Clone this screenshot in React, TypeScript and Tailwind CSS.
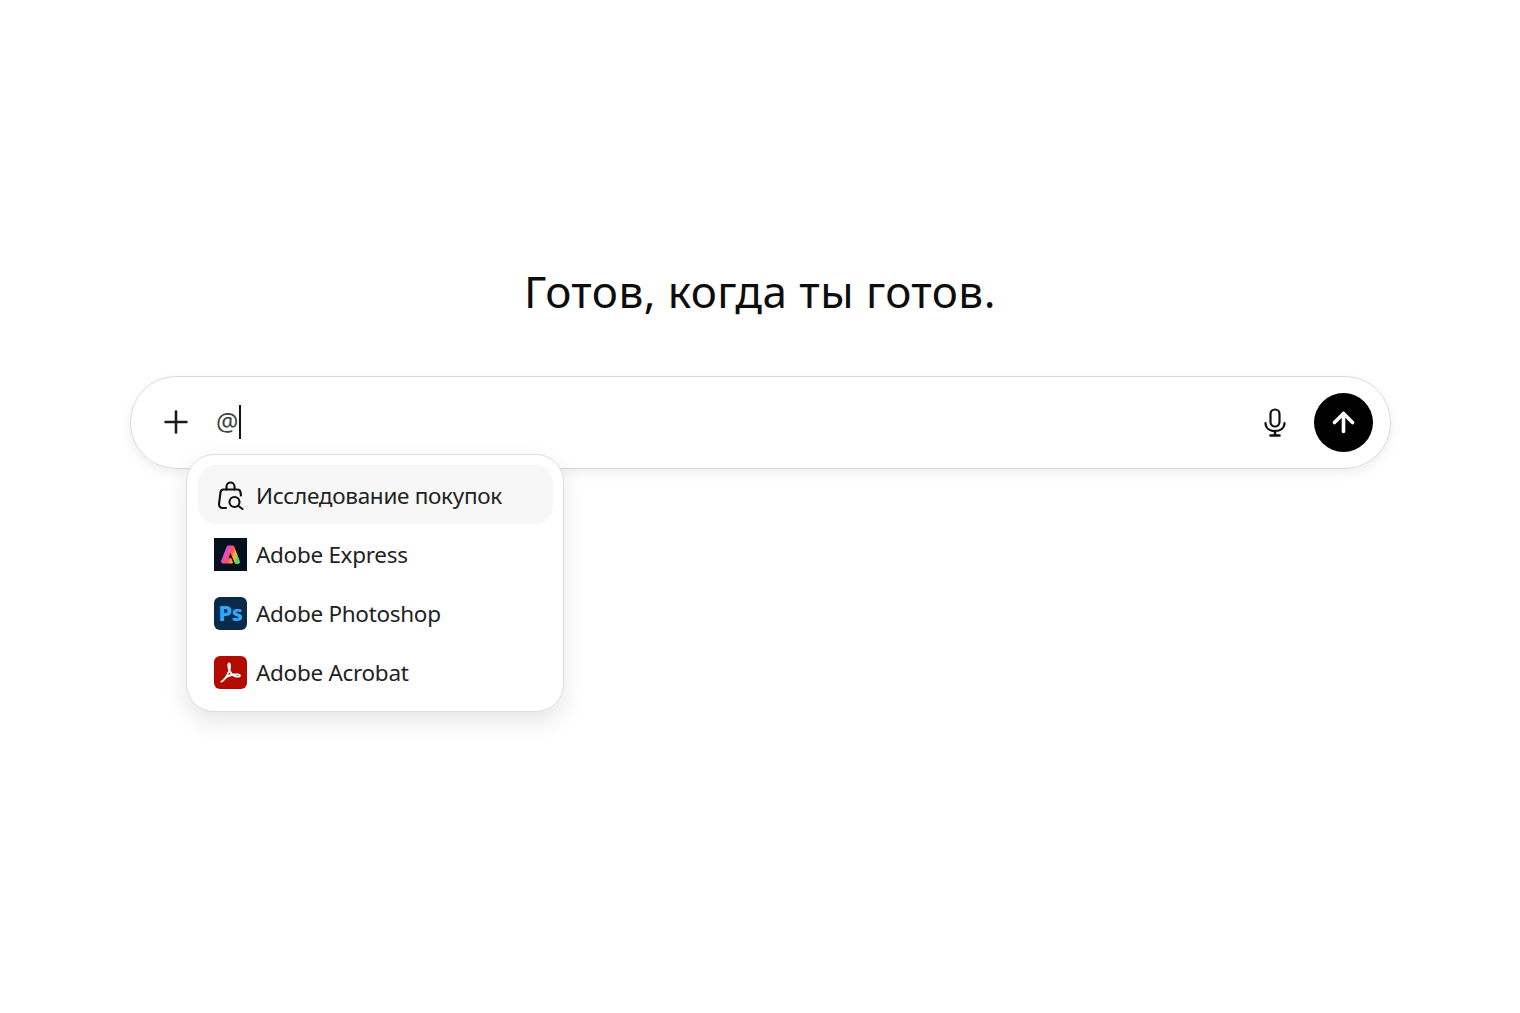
import { ArrowUp, Plus } from "lucide-react";
import { JSX, ReactNode, SVGProps } from "react";

const font = { fontFamily: '"Noto Sans", "Open Sans", sans-serif' };

export default function App() {
  return (
    <div
      className="flex h-[1013px] flex-col items-center overflow-hidden bg-white text-[#0d0d0d]"
      style={font}
    >
      <h1 className="mt-[263px] h-[56px] text-[44px] leading-[56px] font-normal tracking-[0.45px]">
        Готов, когда ты готов.
      </h1>
      <div className="relative mt-[57px] ml-[1px] w-[1261px]">
        <div className="flex h-[93px] items-center rounded-[46px] border border-[#d9d9d9] pr-[17px] pb-[1px] pl-[27px] shadow-[0_4px_12px_rgba(0,0,0,0.07)]">
          <Plus size={36} strokeWidth={1.7} className="text-[#1a1a1a]" />
          <div className="ml-[22px] flex flex-1 items-center text-[25px] text-[#444]">
            @<span className="ml-[1px] h-[34px] w-[2px] bg-[#111]" />
          </div>
          <MicIcon className="mr-[23px] h-[32px] w-[32px]" />
          <button className="flex h-[59px] w-[59px] items-center justify-center rounded-full bg-black">
            <ArrowUp size={31} strokeWidth={2.8} className="text-white" />
          </button>
        </div>
        <div className="absolute top-[78px] left-[56px] flex w-[378px] flex-col rounded-[28px] border border-[#dedede] bg-white py-[10px] pr-[10px] pl-[11px] shadow-[0_10px_24px_rgba(0,0,0,0.1)]">
          <MenuRow active icon={<BagSearchIcon className="h-[33px] w-[33px]" />}>
            Исследование покупок
          </MenuRow>
          <MenuRow icon={<ExpressIcon />}>Adobe Express</MenuRow>
          <MenuRow icon={<PhotoshopIcon />}>Adobe Photoshop</MenuRow>
          <MenuRow icon={<AcrobatIcon />}>Adobe Acrobat</MenuRow>
        </div>
      </div>
    </div>
  );
}

function MenuRow(props: { active?: boolean; icon: ReactNode; children: ReactNode }) {
  return (
    <div
      className={
        props.active
          ? "flex h-[59px] items-center gap-[9px] rounded-[18px] bg-[#f7f7f7] px-[16px] pt-[2px]"
          : "flex h-[59px] items-center gap-[9px] rounded-[18px] px-[16px] pt-[2px]"
      }
    >
      <span className="flex h-[33px] w-[33px] shrink-0 items-center justify-center">
        {props.icon}
      </span>
      <span className="pt-[2px] text-[22.5px] leading-none tracking-[-0.3px] text-[#222]">
        {props.children}
      </span>
    </div>
  );
}

function MicIcon(props: JSX.IntrinsicAttributes & SVGProps<SVGSVGElement>) {
  return (
    <svg {...props} viewBox="0 0 32 32" fill="none" stroke="#111" strokeWidth="2.2" strokeLinecap="round">
      <rect x="11.5" y="3.5" width="9" height="17" rx="4.5" />
      <path d="M6.5 17c0 5 4 8 9.500 8s9.500-3 9.500-8" />
      <path d="M16 25v4M11.500 29.500h9" strokeWidth="2.600" />
    </svg>
  );
}

function BagSearchIcon(props: JSX.IntrinsicAttributes & SVGProps<SVGSVGElement>) {
  return (
    <svg {...props} viewBox="0 0 33 33" fill="none" stroke="#111" strokeWidth="2.1" strokeLinecap="round" strokeLinejoin="round">
      <path d="M12.500 10.500V7.500a4 4 0 0 1 8 0v3" />
      <path d="M12 29H8.500A3.500 3.500 0 0 1 5 25l1.500-11.500a3.200 3.200 0 0 1 3.200-3h13.600a3.200 3.200 0 0 1 3.200 3l.5 3" />
      <circle cx="20.500" cy="23" r="5" />
      <path d="M24.500 27l4 3" />
    </svg>
  );
}

function ExpressIcon() {
  return (
    <svg viewBox="0 0 33 33" className="h-[33px] w-[33px]">
      <defs>
        <linearGradient id="express" x1="0" y1="0.2" x2="1" y2="0.6">
          <stop offset="0" stopColor="#6a5cff" />
          <stop offset="0.3" stopColor="#e848c8" />
          <stop offset="0.55" stopColor="#ff5a3c" />
          <stop offset="0.75" stopColor="#ffb13c" />
          <stop offset="1" stopColor="#4fd66a" />
        </linearGradient>
      </defs>
      <rect width="33" height="33" fill="#07101f" />
      <path
        d="M13.500 8h6L25.500 23.500a1.500 1.500 0 0 1-1.500 2h-2.500L16.500 14l-2.800 6.500h3.300l1.500 4.500H9a1.500 1.500 0 0 1-1.500-2z"
        fill="url(#express)"
        stroke="url(#express)"
        strokeWidth="1"
        strokeLinejoin="round"
      />
    </svg>
  );
}

function PhotoshopIcon() {
  return (
    <span className="flex h-[33px] w-[33px] items-center justify-center rounded-[6px] bg-[#0a2a4a] pb-[3px] text-[22px] leading-none font-extrabold tracking-[-0.5px] text-[#31a8ff]">
      Ps
    </span>
  );
}

function AcrobatIcon() {
  return (
    <svg viewBox="0 0 33 33" className="h-[33px] w-[33px]">
      <rect width="33" height="33" rx="6" fill="#b30b00" />
      <path
        d="M7.500 25.500c3-1 6-6.500 8-11.500.8-2 .8-6.500-.4-6.500-1.400 0-1 4.500.4 7 1.500 3 4 5.500 6.500 6 2.500.4 4 0 4-1 0-1.200-3-1.400-6-1-3 .5-8 2-10.500 5.500-1 1.200-2.500 2-2 1.500z"
        fill="none"
        stroke="#fff"
        strokeWidth="1.800"
        strokeLinejoin="round"
      />
    </svg>
  );
}
